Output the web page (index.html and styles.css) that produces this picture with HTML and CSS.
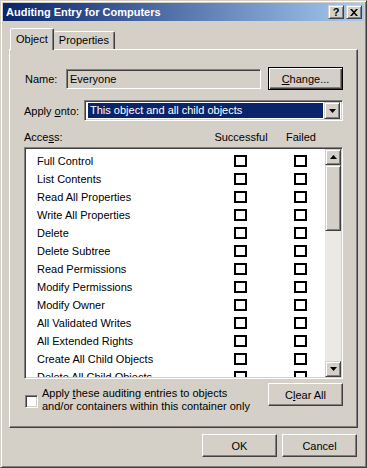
FILE: index.html
```html
<!DOCTYPE html>
<html lang="en">
<head>
  <meta charset="UTF-8" />
  <title>Auditing Entry for Computers</title>
  <link rel="stylesheet" href="styles.css">
</head>
<body>

  <div class="window">
    <!-- Title bar -->
    <div class="titlebar">
      <span class="title">Auditing Entry for Computers</span>
      <div class="title-buttons">
        <span class="raised tbtn">?</span>
        <span class="raised tbtn">
          <svg width="8" height="7" viewBox="0 0 8 7"><path d="M0 0h2l2 2.3L6 0h2L5 3.5 8 7H6L4 4.7 2 7H0l3-3.5z" fill="#000"/></svg>
        </span>
      </div>
    </div>

    <!-- Tabs -->
    <div class="tabs">
      <span class="tab active">Object</span>
      <span class="tab">Properties</span>
    </div>

    <div class="panel">
      <div class="name-row">
        <span class="name-lbl">Name:</span>
        <div class="field">Everyone</div>
        <button class="btn default"><u>C</u>hange...</button>
      </div>

      <div class="apply-row">
        <span class="apply-lbl">Apply <u>o</u>nto:</span>
        <div class="combo">
          <div class="combo-value">This object and all child objects</div>
          <span class="raised combo-arrow">
            <svg width="7" height="4" viewBox="0 0 7 4"><path d="M0 0h7L3.5 4z" fill="#000"/></svg>
          </span>
        </div>
      </div>

      <div class="access-head">
        <span>Acce<u>s</u>s:</span>
        <span class="col">Successful</span>
        <span class="col">Failed</span>
      </div>

      <div class="list">
        <div class="list-items">
          <div class="item"><span>Full Control</span><i class="box"></i><i class="box"></i></div>
          <div class="item"><span>List Contents</span><i class="box"></i><i class="box"></i></div>
          <div class="item"><span>Read All Properties</span><i class="box"></i><i class="box"></i></div>
          <div class="item"><span>Write All Properties</span><i class="box"></i><i class="box"></i></div>
          <div class="item"><span>Delete</span><i class="box"></i><i class="box"></i></div>
          <div class="item"><span>Delete Subtree</span><i class="box"></i><i class="box"></i></div>
          <div class="item"><span>Read Permissions</span><i class="box"></i><i class="box"></i></div>
          <div class="item"><span>Modify Permissions</span><i class="box"></i><i class="box"></i></div>
          <div class="item"><span>Modify Owner</span><i class="box"></i><i class="box"></i></div>
          <div class="item"><span>All Validated Writes</span><i class="box"></i><i class="box"></i></div>
          <div class="item"><span>All Extended Rights</span><i class="box"></i><i class="box"></i></div>
          <div class="item"><span>Create All Child Objects</span><i class="box"></i><i class="box"></i></div>
          <div class="item"><span>Delete All Child Objects</span><i class="box"></i><i class="box"></i></div>
        </div>
        <div class="scrollbar">
          <span class="raised sb-btn">
            <svg width="7" height="4" viewBox="0 0 7 4"><path d="M3.5 0L7 4H0z" fill="#000"/></svg>
          </span>
          <span class="raised sb-thumb"></span>
          <span class="sb-track"></span>
          <span class="raised sb-btn">
            <svg width="7" height="4" viewBox="0 0 7 4"><path d="M0 0h7L3.5 4z" fill="#000"/></svg>
          </span>
        </div>
      </div>

      <div class="bottom-row">
        <div class="inherit">
          <span class="check3d"></span>
          <span class="inherit-text">Apply <u>t</u>hese auditing entries to objects<br>and/or containers within this container only</span>
        </div>
        <button class="btn">C<u>l</u>ear All</button>
      </div>
    </div>

    <div class="dialog-buttons">
      <button class="btn">OK</button>
      <button class="btn">Cancel</button>
    </div>
  </div>

</body>
</html>
```

FILE: styles.css
```css
body {
  margin: 0;
  background: #d4d0c8;
  font-family: 'Liberation Sans', Arial, sans-serif;
  font-size: 11px;
  color: #000;
}
u {
  text-decoration: underline;
  text-underline-offset: 1px;
}
.window {
  width: 367px;
  height: 468px;
  box-sizing: border-box;
  background: #d4d0c8;
  border: 1px solid;
  border-color: #d4d0c8 #404040 #404040 #d4d0c8;
  box-shadow: inset 1px 1px #fff, inset -1px -1px #808080;
  padding: 2px;
}
.raised {
  box-sizing: border-box;
  background: #d4d0c8;
  border: 1px solid;
  border-color: #d4d0c8 #404040 #404040 #d4d0c8;
  box-shadow: inset 1px 1px #fff, inset -1px -1px #808080;
}

/* title bar */
.titlebar {
  height: 18px;
  display: flex;
  align-items: center;
  justify-content: space-between;
  background: linear-gradient(to right, #0a246a, #a6caf0);
  padding: 0 2px 0 3px;
}
.title {
  color: #fff;
  font-weight: bold;
}
.title-buttons {
  display: flex;
  gap: 2px;
}
.tbtn {
  width: 16px;
  height: 14px;
  display: flex;
  align-items: center;
  justify-content: center;
  font-weight: bold;
  font-size: 11px;
  line-height: 12px;
}

/* tabs */
.tabs {
  display: flex;
  align-items: flex-end;
  height: 21px;
  margin: 7px 0 0 7px;
}
.tab {
  height: 18px;
  line-height: 17px;
  box-sizing: border-box;
  padding: 0 5px;
  border: 1px solid;
  border-bottom: none;
  border-left: none;
  border-color: #fff #404040 transparent #fff;
  box-shadow: inset -1px 0 #808080;
  border-radius: 2px 2px 0 0;
}
.tab.active {
  height: 22px;
  line-height: 21px;
  margin-bottom: -1px;
  position: relative;
  z-index: 1;
  background: #d4d0c8;
  border-left: 1px solid #fff;
  padding: 0 5px 1px;
}

/* panel */
.panel {
  height: 379px;
  box-sizing: border-box;
  margin: 0 6px;
  border: 1px solid;
  border-color: #fff #404040 #404040 #fff;
  box-shadow: inset -1px -1px #808080;
  padding: 17px 14px 0 14px;
}
.name-row {
  display: flex;
  align-items: center;
  height: 23px;
}
.name-lbl {
  width: 41px;
  padding-left: 1px;
}
.field {
  width: 195px;
  height: 20px;
  box-sizing: border-box;
  border: 1px solid;
  border-color: #808080 #fff #fff #808080;
  box-shadow: inset 1px 1px #404040, inset -1px -1px #d4d0c8;
  padding-left: 3px;
  line-height: 18px;
}
.btn {
  width: 75px;
  height: 23px;
  box-sizing: border-box;
  font: inherit;
  color: #000;
  padding: 0;
  background: #d4d0c8;
  border: 1px solid;
  border-color: #fff #404040 #404040 #fff;
  box-shadow: inset -1px -1px #808080;
}
.btn.default {
  border-color: #000;
  box-shadow: inset 1px 1px #fff, inset -1px -1px #404040, inset -2px -2px #808080;
}
.name-row .btn {
  margin-left: 7px;
}
.apply-row {
  display: flex;
  align-items: center;
  height: 21px;
  margin-top: 10px;
}
.apply-lbl {
  width: 60px;
}
.combo {
  width: 259px;
  height: 21px;
  box-sizing: border-box;
  display: flex;
  background: #fff;
  border: 1px solid;
  border-color: #808080 #fff #fff #808080;
  box-shadow: inset 1px 1px #404040, inset -1px -1px #d4d0c8;
  padding: 2px 2px 2px 3px;
}
.combo-value {
  flex: 1;
  background: #0a246a;
  color: #fff;
  line-height: 15px;
  padding-left: 2px;
  margin-right: 1px;
}
.combo-arrow {
  width: 16px;
  margin: -1px 0;
  display: flex;
  align-items: center;
  justify-content: center;
}

/* access list */
.access-head {
  display: grid;
  grid-template-columns: 187px 60px 60px;
  margin-top: 10px;
  line-height: 13px;
}
.access-head .col {
  text-align: center;
}
.list {
  margin-top: 3px;
  width: 319px;
  height: 232px;
  box-sizing: border-box;
  display: flex;
  background: #fff;
  border: 1px solid;
  border-color: #808080 #fff #fff #808080;
  box-shadow: inset 1px 1px #404040, inset -1px -1px #d4d0c8;
  padding: 1px;
}
.list-items {
  flex: 1;
  overflow: hidden;
  padding-top: 3px;
}
.item {
  display: grid;
  grid-template-columns: 174px 60px 1fr;
  align-items: center;
  height: 18px;
  padding-left: 11px;
}
.box {
  display: block;
  width: 13px;
  height: 12px;
  box-sizing: border-box;
  border: 2px solid #000;
  margin-left: 23px;
}
.scrollbar {
  width: 16px;
  display: flex;
  flex-direction: column;
  background: #ece9e4;
}
.sb-btn {
  height: 16px;
  display: flex;
  align-items: center;
  justify-content: center;
}
.sb-thumb {
  height: 66px;
}
.sb-track {
  flex: 1;
}

/* bottom */
.bottom-row {
  display: flex;
  justify-content: space-between;
  align-items: flex-start;
  margin-top: 4px;
}
.inherit {
  display: flex;
  align-items: flex-start;
  gap: 4px;
  padding-left: 1px;
}
.check3d {
  width: 13px;
  height: 13px;
  box-sizing: border-box;
  margin-top: 12px;
  background: #fff;
  border: 1px solid;
  border-color: #808080 #fff #fff #808080;
  box-shadow: inset 1px 1px #404040, inset -1px -1px #d4d0c8;
}
.inherit-text {
  margin-top: 4px;
  line-height: 13px;
}
.dialog-buttons {
  display: flex;
  justify-content: flex-end;
  gap: 5px;
  margin-top: 6px;
  padding-right: 7px;
}
```
